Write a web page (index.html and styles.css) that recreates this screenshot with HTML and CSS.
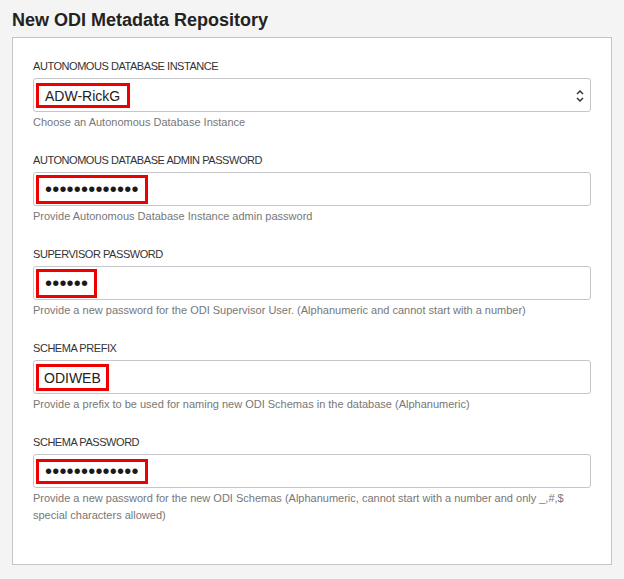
FILE: index.html
```html
<!DOCTYPE html>
<html lang="en">
<head>
<meta charset="utf-8">
<title>New ODI Metadata Repository</title>
<link rel="stylesheet" href="styles.css">
</head>
<body>
<div class="page">
  <h1 class="title">New ODI Metadata Repository</h1>
  <div class="panel">
    <div class="field">
      <div class="label">Autonomous Database Instance</div>
      <div class="input select">
        <span class="mark mark-a">ADW-RickG</span>
        <svg class="arrows" width="10" height="16" viewBox="0 0 10 16"><path d="M2 6 L5 3 L8 6" fill="none" stroke="#333" stroke-width="1.5"/><path d="M2 10 L5 13 L8 10" fill="none" stroke="#333" stroke-width="1.5"/></svg>
      </div>
      <div class="help">Choose an Autonomous Database Instance</div>
    </div>
    <div class="field">
      <div class="label">Autonomous Database Admin Password</div>
      <div class="input">
        <span class="mark mark-b dots">•••••••••••••</span>
      </div>
      <div class="help">Provide Autonomous Database Instance admin password</div>
    </div>
    <div class="field">
      <div class="label">Supervisor Password</div>
      <div class="input">
        <span class="mark mark-b dots">••••••</span>
      </div>
      <div class="help">Provide a new password for the ODI Supervisor User. (Alphanumeric and cannot start with a number)</div>
    </div>
    <div class="field">
      <div class="label">Schema Prefix</div>
      <div class="input">
        <span class="mark mark-c">ODIWEB</span>
      </div>
      <div class="help">Provide a prefix to be used for naming new ODI Schemas in the database (Alphanumeric)</div>
    </div>
    <div class="field">
      <div class="label">Schema Password</div>
      <div class="input">
        <span class="mark mark-d dots">•••••••••••••</span>
      </div>
      <div class="help">Provide a new password for the new ODI Schemas (Alphanumeric, cannot start with a number and only _,#,$ special characters allowed)</div>
    </div>
  </div>
</div>
</body>
</html>
```
FILE: styles.css
```css
html, body {
  margin: 0;
  padding: 0;
}
body {
  background: #f4f4f4;
  font-family: "Liberation Sans", Arial, sans-serif;
  color: #333;
}
.page {
  padding: 10px 12px 13px 12px;
}
.title {
  margin: 0;
  font-size: 18px;
  line-height: 20px;
  font-weight: bold;
  color: #222;
}
.panel {
  margin-top: 7px;
  width: 600px;
  box-sizing: border-box;
  background: #fff;
  border: 1px solid #c3c4c6;
  padding: 20px 20px 40px 20px;
  display: flex;
  flex-direction: column;
  gap: 21px;
}
.field {
  display: flex;
  flex-direction: column;
}
.label {
  font-size: 11px;
  line-height: 16px;
  letter-spacing: -0.45px;
  text-transform: uppercase;
  color: #333;
}
.input {
  margin-top: 4px;
  height: 34px;
  box-sizing: border-box;
  border: 1px solid #c4c6c9;
  border-radius: 3px;
  background: #fff;
  display: flex;
  align-items: flex-start;
  padding: 2px 2px;
}
.select {
  justify-content: space-between;
  align-items: flex-start;
}
.arrows {
  margin-top: 7px;
  margin-right: 3px;
}
.mark {
  display: inline-flex;
  align-items: center;
  box-sizing: border-box;
  border: 3px solid #ee0000;
  padding: 0 7px 0 6px;
  font-size: 14px;
  color: #222;
}
.mark-a {
  margin-top: 2px;
  height: 25px;
}
.mark-b {
  height: 29px;
}
.mark-c {
  margin-top: 1px;
  height: 27px;
  padding: 0 5px;
}
.mark-d {
  margin-top: 2px;
  height: 25px;
}
.dots {
  font-size: 20px;
  letter-spacing: 0.2px;
  padding: 0 6px 0 6px;
  color: #1a1a1a;
}
.help {
  margin-top: 2px;
  font-size: 11px;
  line-height: 17px;
  color: #777;
}
```
